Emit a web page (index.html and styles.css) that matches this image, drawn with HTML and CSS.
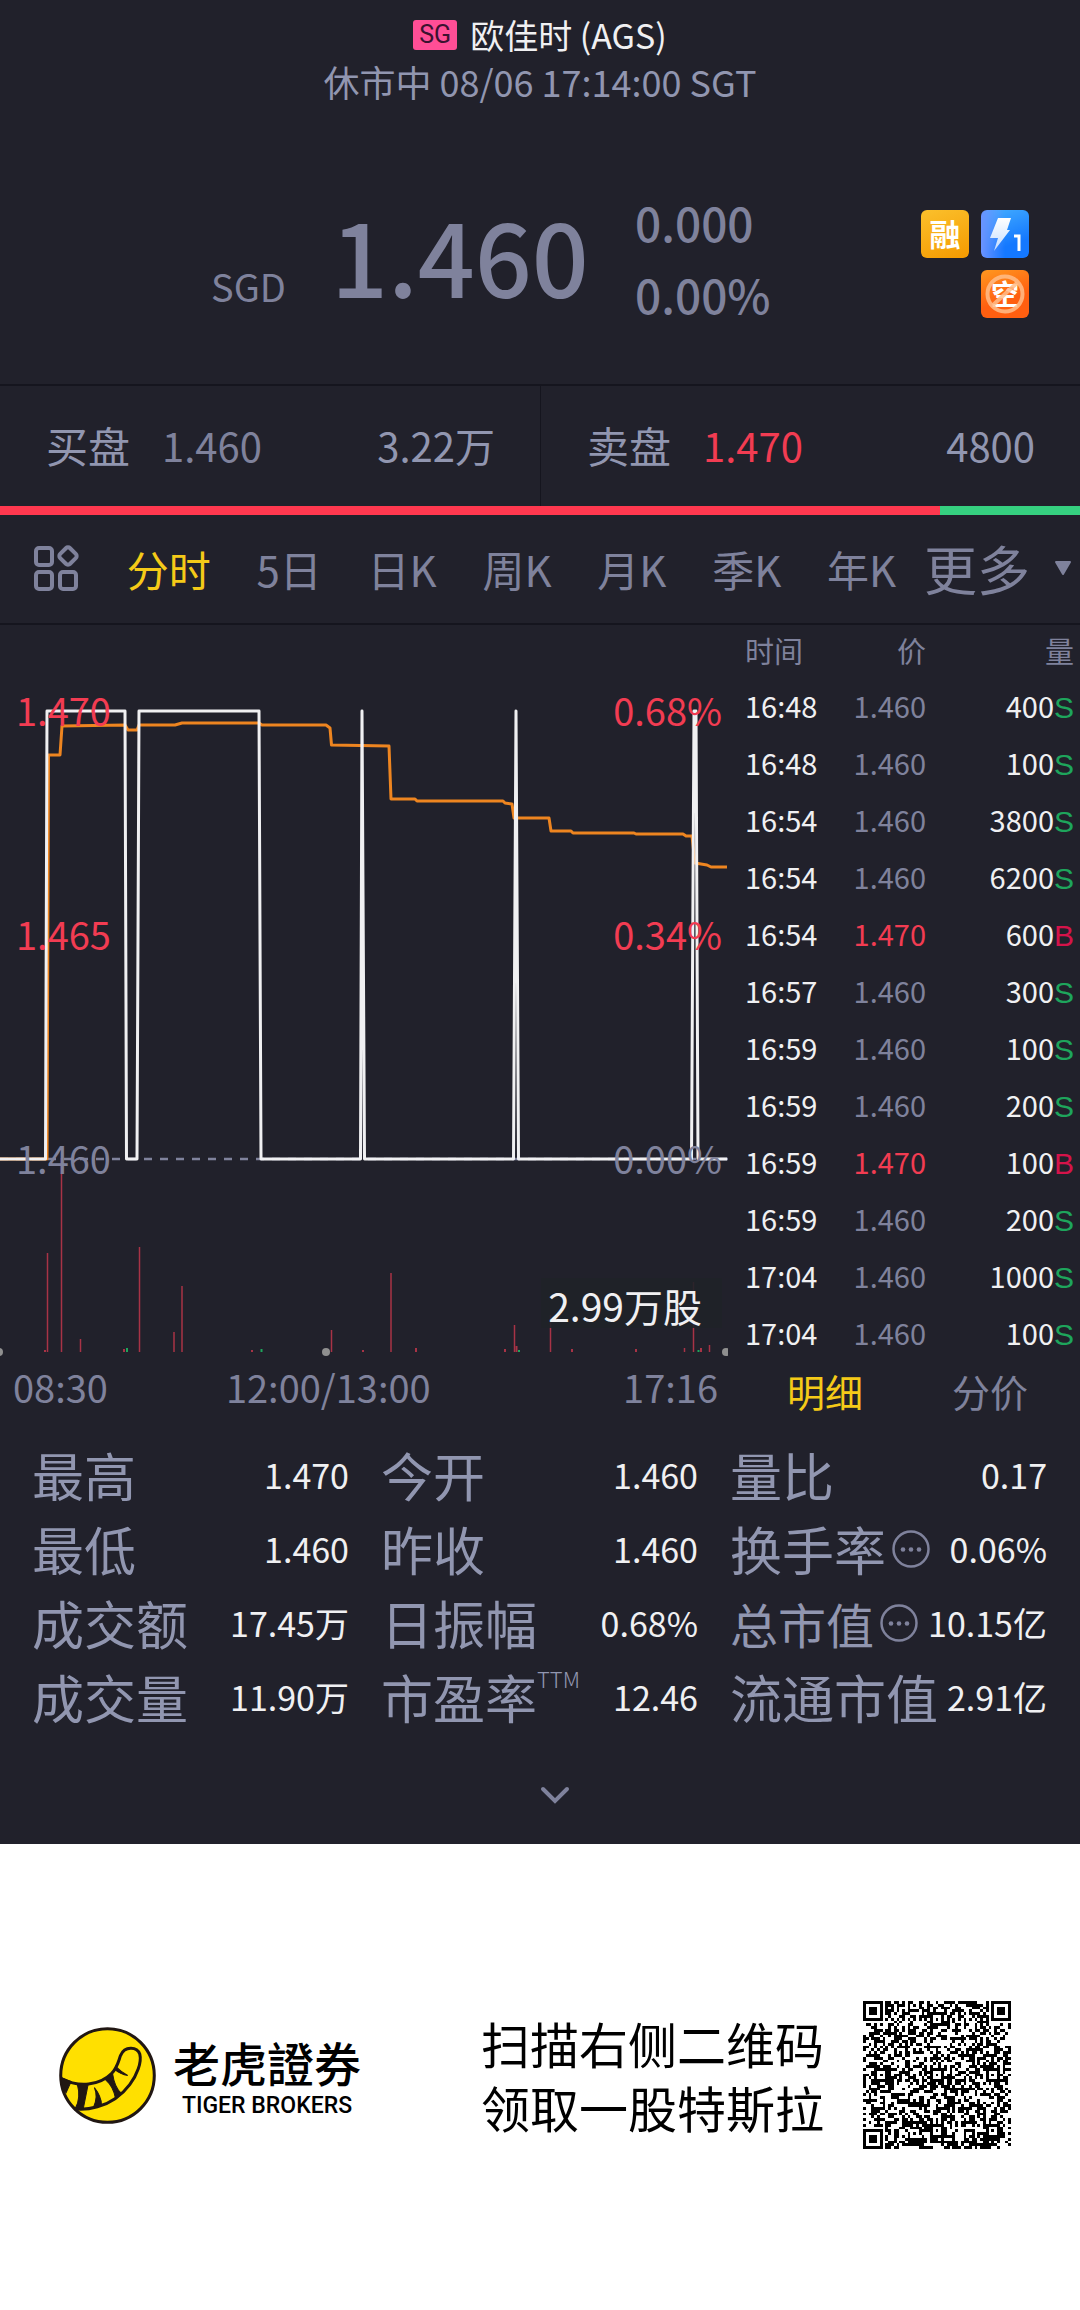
FILE: index.html
```html
<!DOCTYPE html>
<html lang="zh-CN">
<head>
<meta charset="utf-8">
<meta name="viewport" content="width=device-width, initial-scale=1">
<title>欧佳时 (AGS)</title>
<link rel="stylesheet" href="styles.css">
</head>
<body>
<main class="app">
  <header class="header">
    <h1 class="header-title"><span class="market">SG</span>欧佳时 (AGS)</h1>
    <p class="header-status">休市中 08/06 17:14:00 SGT</p>
  </header>

  <section class="quote">
    <span class="quote-currency">SGD</span>
    <strong class="quote-price">1.460</strong>
    <div class="quote-change"><span>0.000</span><span>0.00%</span></div>
    <div class="badges">
      <span class="badge badge-margin">融</span>
      <span class="badge badge-level">
        <svg viewBox="0 0 48 48" aria-hidden="true">
          <defs><linearGradient id="bolt" x1="0" y1="0" x2="0" y2="1"><stop offset="0" stop-color="#fff"/><stop offset="1" stop-color="#c3dcff"/></linearGradient></defs>
          <path d="M17 8H30L26 20H29L13 41L17 28H9Z" fill="url(#bolt)"/>
          <path d="M33 26H38V41" fill="none" stroke="#fff" stroke-width="3"/>
        </svg>
      </span>
      <span class="badge badge-short">空
        <svg viewBox="0 0 48 48" aria-hidden="true"><g fill="none" stroke="#ffbd8a" stroke-opacity=".85" stroke-width="4"><circle cx="24" cy="24" r="17.5"/><path d="M12 35L36 13"/></g></svg>
      </span>
    </div>
  </section>

  <section class="depth">
    <div class="depth-side"><span>买盘</span><span class="depth-price">1.460</span><span class="depth-size">3.22万</span></div>
    <div class="depth-side"><span>卖盘</span><span class="depth-price up">1.470</span><span class="depth-size">4800</span></div>
  </section>
  <div class="ratio"><div class="ratio-bid" style="width:87%"></div></div>

  <nav class="periods">
    <button class="layout-button" aria-label="布局">
      <svg viewBox="0 0 48 48" width="48" height="48" aria-hidden="true"><g fill="none" stroke="#7f829c" stroke-width="4"><rect x="3" y="4" width="16" height="17" rx="3"/><rect x="3" y="28" width="16" height="17" rx="3"/><rect x="27" y="28" width="16" height="17" rx="3"/><rect x="28" y="5" width="14" height="14" rx="3" transform="rotate(45 35 12)"/></g></svg>
    </button>
    <button class="period active">分时</button>
    <button class="period">5日</button>
    <button class="period">日K</button>
    <button class="period">周K</button>
    <button class="period">月K</button>
    <button class="period">季K</button>
    <button class="period">年K</button>
    <button class="more">更多<svg viewBox="0 0 18 15" width="18" height="15" aria-hidden="true"><path d="M2 1H16L9 13Z" fill="#7f829c" stroke="#7f829c" stroke-width="2" stroke-linejoin="round"/></svg></button>
  </nav>

  <section class="market-data">
    <div class="chart">
      <svg class="chart-plot" viewBox="0 0 728 740" role="img" aria-label="分时图">
        <path d="M0 534H728" stroke="#7f829c" stroke-width="2.500" stroke-dasharray="8 8"/>
        <g stroke="#a83346" stroke-width="1.5">
          <path d="M47.5 628V727M61.5 533V727M80.5 714V727M139.5 622V727M174 707V727M182 661V727M331.500 705V727M391 648V727M514.500 700V727M550.500 690V727M693.500 657V727M684.500 723V727M709.500 720V727"/>
          <path d="M45 725V727M124 724V727M252 725V727M363 725V727M416 723V727M505 724V727M516.500 721V727M572 724V727M636 724V727M701 723V727" stroke-width="2"/>
        </g>
        <path d="M127 723V727M261.500 724V727M519 725V727M698.500 725V727" stroke="#1ea55c" stroke-width="2"/>
        <path d="M0 534H47L48.500 130H60L62 101L125 100L128 105H137L139 100L175 100L182 98H259L262 100H326L330 103L331.500 120L389 121L391 174H415L417 176H503L505 178L512 179L514 193H549L551 206H571L573 208H634L636 209H683L686 211H692L695 238L707 240L711 242H727" fill="none" stroke="#ee8520" stroke-width="3" stroke-linejoin="round"/>
        <path d="M0 534H45.500L47 86H125L126.500 534H137L139 86H259L261 534H360.500L362 86L364.500 534H513.500L516 86L518.500 534H691.500L694 86H696L698 534H727" fill="none" stroke="#f0f0f2" stroke-width="3" stroke-linejoin="round"/>
        <rect x="541" y="653" width="181" height="50" fill="#1f2228" fill-opacity=".9"/>
        <g fill="#8f8f8f"><circle cx="-1" cy="727" r="4"/><circle cx="326" cy="727" r="4"/><circle cx="726" cy="727" r="4"/></g>
        <g class="axis">
          <g class="axis-up"><text x="16" y="101">1.470</text><text x="16" y="325">1.465</text></g>
          <text x="16" y="549">1.460</text>
          <g text-anchor="end"><g class="axis-up"><text x="722" y="101">0.68%</text><text x="722" y="325">0.34%</text></g><text x="722" y="549">0.00%</text><text class="axis-volume" x="702" y="697">2.99万股</text></g>
        </g>
      </svg>
      <div class="chart-times"><span>08:30</span><span>12:00/13:00</span><span>17:16</span></div>
    </div>
    <div class="trades">
      <table>
        <colgroup><col class="col-time"><col class="col-price"><col><col class="col-side"></colgroup>
        <thead><tr><th>时间</th><th>价</th><th colspan="2">量</th></tr></thead>
        <tbody>
          <tr><td>16:48</td><td>1.460</td><td>400</td><td class="sell">S</td></tr>
          <tr><td>16:48</td><td>1.460</td><td>100</td><td class="sell">S</td></tr>
          <tr><td>16:54</td><td>1.460</td><td>3800</td><td class="sell">S</td></tr>
          <tr><td>16:54</td><td>1.460</td><td>6200</td><td class="sell">S</td></tr>
          <tr><td>16:54</td><td class="up">1.470</td><td>600</td><td class="buy">B</td></tr>
          <tr><td>16:57</td><td>1.460</td><td>300</td><td class="sell">S</td></tr>
          <tr><td>16:59</td><td>1.460</td><td>100</td><td class="sell">S</td></tr>
          <tr><td>16:59</td><td>1.460</td><td>200</td><td class="sell">S</td></tr>
          <tr><td>16:59</td><td class="up">1.470</td><td>100</td><td class="buy">B</td></tr>
          <tr><td>16:59</td><td>1.460</td><td>200</td><td class="sell">S</td></tr>
          <tr><td>17:04</td><td>1.460</td><td>1000</td><td class="sell">S</td></tr>
          <tr><td>17:04</td><td>1.460</td><td>100</td><td class="sell">S</td></tr>
        </tbody>
      </table>
      <div class="trade-tabs"><button class="active">明细</button><button>分价</button></div>
    </div>
  </section>

  <dl class="stats">
    <div class="stat"><dt>最高</dt><dd>1.470</dd></div>
    <div class="stat"><dt>今开</dt><dd>1.460</dd></div>
    <div class="stat"><dt>量比</dt><dd>0.17</dd></div>
    <div class="stat"><dt>最低</dt><dd>1.460</dd></div>
    <div class="stat"><dt>昨收</dt><dd>1.460</dd></div>
    <div class="stat"><dt>换手率<svg class="info" viewBox="0 0 38 38" aria-hidden="true"><circle cx="19" cy="19" r="17.500" fill="none" stroke="#7f829c" stroke-width="2.500"/><g fill="#7f829c"><circle cx="11" cy="19.500" r="2.300"/><circle cx="19" cy="19.500" r="2.300"/><circle cx="27" cy="19.500" r="2.300"/></g></svg></dt><dd>0.06%</dd></div>
    <div class="stat"><dt>成交额</dt><dd>17.45万</dd></div>
    <div class="stat"><dt>日振幅</dt><dd>0.68%</dd></div>
    <div class="stat"><dt class="compact">总市值<svg class="info" viewBox="0 0 38 38" aria-hidden="true"><circle cx="19" cy="19" r="17.500" fill="none" stroke="#7f829c" stroke-width="2.500"/><g fill="#7f829c"><circle cx="11" cy="19.500" r="2.300"/><circle cx="19" cy="19.500" r="2.300"/><circle cx="27" cy="19.500" r="2.300"/></g></svg></dt><dd>10.15亿</dd></div>
    <div class="stat"><dt>成交量</dt><dd>11.90万</dd></div>
    <div class="stat"><dt>市盈率<span class="ttm">TTM</span></dt><dd>12.46</dd></div>
    <div class="stat"><dt>流通市值</dt><dd>2.91亿</dd></div>
  </dl>
  <div class="expand">
    <button aria-label="展开"><svg viewBox="0 0 30 20" width="30" height="20" aria-hidden="true"><path d="M3 3L15 15L27 3" fill="none" stroke="#7f829c" stroke-width="4" stroke-linecap="round"/></svg></button>
  </div>
</main>

<footer class="promo">
  <svg class="promo-logo" viewBox="0 0 96 96" role="img" aria-label="老虎證券">
    <circle cx="48" cy="48" r="46.300" fill="#ffe000" stroke="#211713" stroke-width="3"/>
    <path d="M2 51C20 60 40 58 52 46C58 40 59 33 61 28C65 19 77 19 80 27C82 35 77 48 70 57C61 69 49 76 38 79C31 81 22 82 15 81" fill="none" stroke="#211713" stroke-width="3"/>
    <path d="M2 50L12 54L7 65L3 60ZM18 56L29 56L24 81L16 81Q22 70 18 56ZM34 80Q39 69 35 60Q42 69 42 77ZM46 52L53 46Q55 60 62 66L56 71Q54 59 46 52ZM56 39Q62 45 68 48Q61 47 55 42Z" fill="#211713" stroke="#211713" stroke-width="1"/>
  </svg>
  <div class="promo-brand"><strong>老虎證券</strong><span>TIGER BROKERS</span></div>
  <p class="promo-text">扫描右侧二维码<br>领取一股特斯拉</p>
  <svg class="promo-code" id="code" viewBox="0 0 53 53" shape-rendering="crispEdges" role="img" aria-label="二维码"></svg>
</footer>
<script src="code.js"></script>
</body>
</html>
```
FILE: styles.css
```css
* { box-sizing: border-box; }

body {
  margin: 0;
  background: #fff;
  font-family: "Noto Sans CJK SC", "Noto Sans", sans-serif;
}

h1, p, dl, dd { margin: 0; }

button {
  padding: 0;
  border: 0;
  background: none;
  color: inherit;
  font: inherit;
  white-space: nowrap;
}

svg { display: block; }

.app {
  background: #21212b;
  color: #7f829c;
}

.up { color: #f23c52; }
.active { color: #f5ca18; }

.header {
  padding-top: 11px;
  text-align: center;
}

.header-title {
  display: flex;
  justify-content: center;
  align-items: center;
  gap: 13px;
  font-size: 34px;
  font-weight: 400;
  line-height: 48px;
  color: #f0f0f2;
}

.market {
  padding: 0 6px;
  border-radius: 3px;
  background: #ff4e96;
  color: #3b1230;
  font: 25px/30px Roboto, sans-serif;
}

.header-status {
  font-size: 36px;
  line-height: 44px;
  color: #9196b0;
}

.quote {
  display: grid;
  grid-template-columns: 120px 304px 1fr 108px;
  align-items: start;
  height: 281px;
  padding: 83px 51px 0 211px;
}

.quote-currency {
  padding-top: 72px;
  font-size: 38px;
  line-height: 56px;
}

.quote-price {
  font-size: 100px;
  font-weight: 500;
  line-height: 138px;
}

.quote-change {
  display: grid;
  font-size: 46px;
  font-weight: 500;
  line-height: 72px;
}

.badges {
  display: flex;
  flex-wrap: wrap;
  justify-content: flex-end;
  gap: 12px;
  padding-top: 24px;
}

.badge {
  position: relative;
  width: 48px;
  height: 48px;
  border-radius: 6px;
  color: #fff;
  font-size: 31px;
  font-weight: 700;
  line-height: 46px;
  text-align: center;
}

.badge svg { position: absolute; inset: 0; }
.badge-margin { background: linear-gradient(160deg, #fbc02c, #f59a00); }
.badge-level { background: linear-gradient(90deg, #6b93ff, transparent 50%), linear-gradient(160deg, #46b0ff, #1478ff 70%); }
.badge-short { background: linear-gradient(160deg, #ff9820, #ff5f10 60%); font-size: 28px; }

.depth {
  display: grid;
  grid-template-columns: 1fr 1fr;
  border-top: 2px solid #15151e;
  font-size: 40px;
  line-height: 118px;
  color: #9196b0;
}

.depth-side {
  display: flex;
  padding: 0 45px 2px 46px;
}

.depth-side + .depth-side { border-left: 1px solid #15151e; }
.depth-side span:first-child { font-size: 42px; }

.depth-price {
  margin-left: 32px;
  color: #7f829c;
}

.depth-price.up { color: #f23c52; }
.depth-size { margin-left: auto; }

.ratio {
  height: 9px;
  background: #36d080;
}

.ratio-bid {
  height: 100%;
  background: #ff384f;
}

.periods {
  display: flex;
  justify-content: space-between;
  align-items: center;
  height: 110px;
  padding: 0 8px 2px 33px;
  border-bottom: 2px solid #15151e;
  font-size: 42px;
}

.more {
  display: flex;
  align-items: center;
  gap: 24px;
  margin-left: -18px;
  font-size: 53px;
}

.market-data {
  display: grid;
  grid-template-columns: minmax(0, 728fr) minmax(0, 352fr);
}

.chart-plot { width: 100%; }

.axis {
  fill: #7f829c;
  font-size: 38px;
}

.axis-up { fill: #f23c52; }

.axis-volume {
  fill: #f0f0f2;
  font-size: 39px;
}

.chart-times {
  display: flex;
  padding: 0 10px 0 13px;
  font-size: 38px;
  line-height: 44px;
}

.chart-times span:nth-child(2) { margin: 0 auto 0 118px; }

.trades table {
  width: 100%;
  border-collapse: collapse;
  table-layout: fixed;
  font-size: 29px;
}

.col-time { width: 110px; }
.col-price { width: 88px; }
.col-side { width: 26px; }

.trades th, .trades td {
  height: 57px;
  padding: 0;
  text-align: right;
  vertical-align: top;
  font-weight: 400;
  line-height: 53px;
}

.trades th {
  height: 54px;
  line-height: 50px;
}

.trades th:last-child { padding-right: 6px; }
.trades th:first-child, .trades td:first-child { padding-left: 17px; text-align: left; }
.trades td:first-child, .trades td:nth-child(3) { color: #f0f0f2; }

.trades td:last-child {
  padding-right: 6px;
  font-family: "Liberation Sans", sans-serif;
  font-size: 30px;
  line-height: 57px;
}

.sell { color: #1ea55c; }
.buy { color: #d5134a; }

.trade-tabs {
  display: flex;
  justify-content: space-between;
  padding: 0 52px 0 59px;
  font-size: 38px;
  line-height: 56px;
}

.stats {
  display: grid;
  grid-template-columns: repeat(3, 1fr);
  column-gap: 32px;
  padding: 19px 33px 0 32px;
  line-height: 74px;
}

.stat {
  display: flex;
  justify-content: space-between;
  align-items: center;
  height: 74px;
  white-space: nowrap;
}

.stat dt {
  display: flex;
  align-items: center;
  font-size: 52px;
  color: #9196b0;
}

.stat .compact { font-size: 48px; }

.stat dd {
  font-size: 34px;
  color: #f0f0f2;
}

.info {
  width: 38px;
  height: 38px;
  margin-left: 6px;
}

.ttm {
  align-self: flex-start;
  font-size: 22px;
  font-weight: 300;
  line-height: 36px;
}

.expand {
  display: flex;
  justify-content: center;
  padding: 52px 0 38px 30px;
}

.promo {
  display: flex;
  align-items: center;
  padding: 157px 69px 159px 59px;
}

.promo-logo {
  width: 97px;
  height: 97px;
}

.promo-brand {
  display: grid;
  justify-items: center;
  margin-left: 17px;
}

.promo-brand strong {
  font-size: 47px;
  font-weight: 500;
  line-height: 62px;
}

.promo-brand span {
  font: 500 23px/26px Roboto, sans-serif;
}

.promo-text {
  margin-left: auto;
  font-size: 49px;
  line-height: 64px;
}

.promo-code {
  width: 148px;
  height: 148px;
  margin-left: 39px;
}
```
FILE: code.js
```js
// Draws the code's modules: three finders, the alignment marks and a data field.
const size = 53;
const finders = [[0, 0], [size - 7, 0], [0, size - 7]];
const marks = [[26, 6], [6, 26], [26, 26], [46, 26], [26, 46], [46, 46]];
let seed = 20210806;

function random() {
  seed = (seed * 1103515245 + 12345) % 2147483648;
  return seed / 2147483648;
}

function moduleAt(x, y) {
  for (const [fx, fy] of finders) {
    const d = Math.max(Math.abs(x - fx - 3), Math.abs(y - fy - 3));
    if (d <= 4) return d !== 2 && d !== 4;
  }
  for (const [mx, my] of marks) {
    const d = Math.max(Math.abs(x - mx), Math.abs(y - my));
    if (d <= 2) return d !== 1;
  }
  if (x === 6) return y % 2 === 0;
  if (y === 6) return x % 2 === 0;
  return random() < 0.5;
}

let path = "";
for (let y = 0; y < size; y++) {
  for (let x = 0; x < size; x++) {
    if (moduleAt(x, y)) path += `M${x} ${y}h1v1h-1z`;
  }
}
document.getElementById("code").innerHTML = `<path d="${path}"/>`;
```
